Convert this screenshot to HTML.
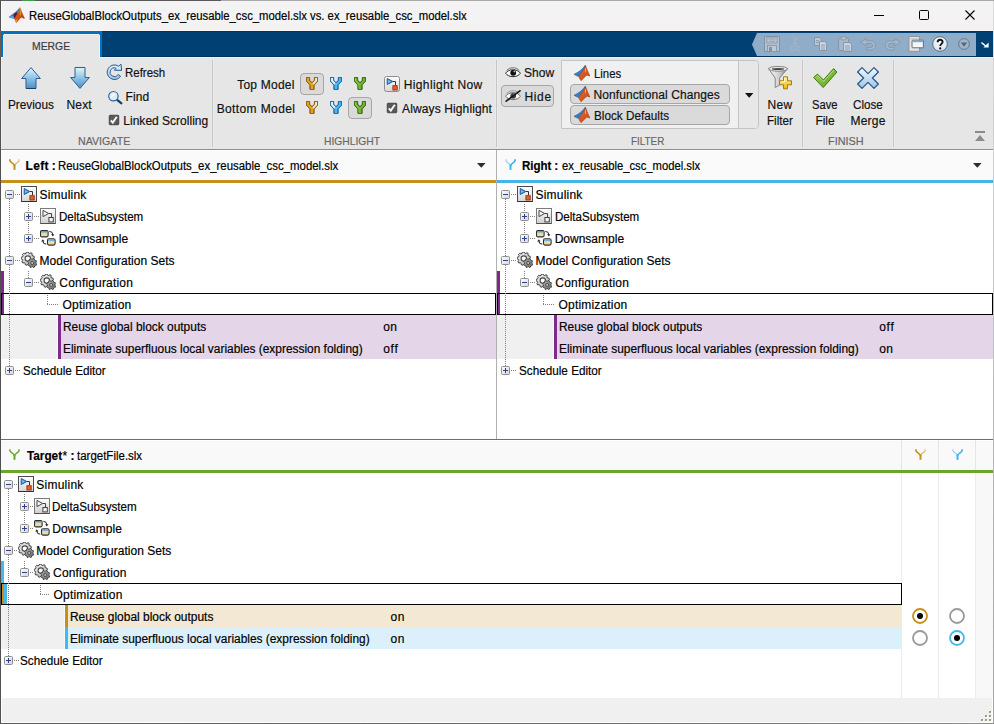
<!DOCTYPE html>
<html lang="en"><head><meta charset="utf-8"><title>Merge</title>
<style>
html,body{margin:0;padding:0;}
body{width:994px;height:724px;overflow:hidden;background:#fff;position:relative;font-family:"Liberation Sans", sans-serif;}
#w{position:absolute;left:0;top:0;width:994px;height:724px;overflow:hidden;}
#w div,#w svg,#w span{position:absolute;}
#w span{white-space:nowrap;line-height:16px;height:16px;transform-origin:0 0;-webkit-text-stroke:0.18px currentColor;}
</style></head><body><div id="w">
<div style="left:0px;top:0px;width:994px;height:724px;background:#fff;"></div>
<div style="left:0px;top:0px;width:994px;height:31px;background:#f3f3f3;"></div>
<div style="left:0px;top:31px;width:994px;height:26px;background:#004073;"></div>
<div style="left:102px;top:31px;width:891px;height:1px;background:#00335f;"></div>
<div style="left:102px;top:56px;width:891px;height:1px;background:#00335f;"></div>
<div style="left:1px;top:30px;width:992px;height:1px;background:#fbf8f5;"></div>
<div style="left:1px;top:31px;width:101px;height:26px;background:#0072c6;"></div>
<div style="left:3px;top:34px;width:97px;height:23px;background:#f7f1ec;"></div>
<div style="left:4px;top:35px;width:95px;height:22px;background:#e6e6e6;"></div>
<div style="left:3px;top:34px;width:1px;height:1px;background:#3a92d2;"></div>
<div style="left:99px;top:34px;width:1px;height:1px;background:#3a92d2;"></div>
<div style="left:1px;top:1px;width:1px;height:29px;background:#fcfcfc;"></div>
<div style="left:1px;top:57px;width:992px;height:92px;background:#e6e6e6;"></div>
<div style="left:100px;top:57px;width:893px;height:1px;background:#f4efeb;"></div>
<div style="left:1px;top:57px;width:2px;height:1px;background:#f8f2ee;"></div>
<div style="left:1px;top:58px;width:1px;height:91px;background:#f0f0f0;"></div>
<div style="left:0px;top:149px;width:994px;height:1px;background:#8e8e8e;"></div>
<div style="left:212px;top:60px;width:1px;height:87px;background:#c6c6c6;"></div>
<div style="left:213px;top:60px;width:1px;height:87px;background:#ececec;"></div>
<div style="left:211px;top:60px;width:1px;height:87px;background:#eaeaea;"></div>
<div style="left:496px;top:60px;width:1px;height:87px;background:#c6c6c6;"></div>
<div style="left:497px;top:60px;width:1px;height:87px;background:#ececec;"></div>
<div style="left:495px;top:60px;width:1px;height:87px;background:#eaeaea;"></div>
<div style="left:802px;top:60px;width:1px;height:87px;background:#c6c6c6;"></div>
<div style="left:803px;top:60px;width:1px;height:87px;background:#ececec;"></div>
<div style="left:801px;top:60px;width:1px;height:87px;background:#eaeaea;"></div>
<div style="left:893px;top:60px;width:1px;height:87px;background:#c6c6c6;"></div>
<div style="left:894px;top:60px;width:1px;height:87px;background:#ececec;"></div>
<div style="left:892px;top:60px;width:1px;height:87px;background:#eaeaea;"></div>
<svg style="left:751px;top:33px" width="226" height="23" viewBox="0 0 226 23"><path d="M6 0H225V23H6L1 11.5Z" fill="#8fadc8"/></svg>
<div style="left:1px;top:150px;width:992px;height:30px;background:#fafafa;"></div>
<div style="left:1px;top:150px;width:992px;height:1px;background:#fff;"></div>
<div style="left:1px;top:180px;width:495px;height:3px;background:#c4901a;"></div>
<div style="left:497px;top:180px;width:496px;height:3px;background:#41b6e6;"></div>
<div style="left:496px;top:150px;width:1px;height:289px;background:#b0b0b0;"></div>
<div style="left:0px;top:439px;width:994px;height:1px;background:#6e6e6e;"></div>
<div style="left:1px;top:271px;width:3px;height:22px;background:#7d2a8c;"></div>
<div style="left:1px;top:293px;width:495px;height:22px;background:#000;"></div>
<div style="left:2px;top:294px;width:493px;height:20px;background:#fff;"></div>
<div style="left:2px;top:294px;width:2px;height:20px;background:#7d2a8c;"></div>
<div style="left:1px;top:315px;width:495px;height:44px;background:#f0f0f1;"></div>
<div style="left:57px;top:315px;width:1px;height:44px;background:#fbfbfb;"></div>
<div style="left:58px;top:315px;width:3px;height:44px;background:#7d2a8c;"></div>
<div style="left:61px;top:315px;width:435px;height:44px;background:#e4d6e8;"></div>
<div style="left:497px;top:271px;width:3px;height:22px;background:#7d2a8c;"></div>
<div style="left:497px;top:293px;width:496px;height:22px;background:#000;"></div>
<div style="left:498px;top:294px;width:494px;height:20px;background:#fff;"></div>
<div style="left:498px;top:294px;width:2px;height:20px;background:#7d2a8c;"></div>
<div style="left:497px;top:315px;width:496px;height:44px;background:#f0f0f1;"></div>
<div style="left:553px;top:315px;width:1px;height:44px;background:#fbfbfb;"></div>
<div style="left:554px;top:315px;width:3px;height:44px;background:#7d2a8c;"></div>
<div style="left:557px;top:315px;width:436px;height:44px;background:#e4d6e8;"></div>
<svg style="left:477px;top:163px" width="9" height="5" viewBox="0 0 9 5"><path d="M0 0H8.6L4.3 4.8Z" fill="#2c2c2c"/></svg>
<svg style="left:973px;top:163px" width="9" height="5" viewBox="0 0 9 5"><path d="M0 0H8.6L4.3 4.8Z" fill="#2c2c2c"/></svg>
<div style="left:1px;top:440px;width:992px;height:30px;background:#f9f9f9;"></div>
<div style="left:1px;top:440px;width:992px;height:1px;background:#fff;"></div>
<div style="left:1px;top:470px;width:992px;height:3px;background:#6da52c;"></div>
<div style="left:1px;top:698px;width:992px;height:25px;background:#fff;"></div>
<div style="left:2px;top:698px;width:990px;height:24px;background:#f0f0f0;"></div>
<div style="left:976px;top:473px;width:17px;height:225px;background:#f8f8f8;"></div>
<div style="left:901px;top:440px;width:1px;height:30px;background:#e6e6e6;"></div>
<div style="left:901px;top:473px;width:1px;height:225px;background:#ececec;"></div>
<div style="left:938px;top:440px;width:1px;height:30px;background:#e6e6e6;"></div>
<div style="left:938px;top:473px;width:1px;height:225px;background:#ececec;"></div>
<div style="left:975px;top:440px;width:1px;height:30px;background:#e6e6e6;"></div>
<div style="left:975px;top:473px;width:1px;height:225px;background:#ececec;"></div>
<div style="left:1px;top:561px;width:3px;height:22px;background:#46b9eb;"></div>
<div style="left:1px;top:583px;width:901px;height:22px;background:#000;"></div>
<div style="left:2px;top:584px;width:899px;height:20px;background:#fff;"></div>
<div style="left:2px;top:584px;width:2px;height:20px;background:#c4901a;"></div>
<div style="left:4px;top:584px;width:3px;height:20px;background:#46b9eb;"></div>
<div style="left:1px;top:605px;width:900px;height:44px;background:#f0f0f1;"></div>
<div style="left:64px;top:605px;width:1px;height:44px;background:#fbfbfb;"></div>
<div style="left:65px;top:605px;width:3px;height:22px;background:#c4901a;"></div>
<div style="left:68px;top:605px;width:833px;height:22px;background:#f3e8d3;"></div>
<div style="left:65px;top:627px;width:3px;height:22px;background:#46b9eb;"></div>
<div style="left:68px;top:627px;width:833px;height:22px;background:#dbf0fb;"></div>
<svg style="left:9px;top:7px" width="16" height="16" viewBox="0 0 16 16"><defs><linearGradient id="g1" x1="0" y1="0" x2="1" y2="1"><stop offset="0" stop-color="#e8682a"/><stop offset="1" stop-color="#b8360f"/></linearGradient></defs><path d="M0 9.8L4.9 6.1C7 4.6 9 2.6 10.6 0.2L10 4.8L7.4 8.8L5.2 11.7L0.3 10.7Z" fill="#2e84d8"/><path d="M0.2 10.1L4.2 9L5.3 11.5L2 11.1Z" fill="#5aaef0"/><path d="M4.9 6.9L7.4 5.3L8.8 6.8L6.6 10.9L5.2 11.7L4.7 9Z" fill="#5a1a30"/><path d="M10.9 0C12.5 3 14 8.5 16 11.5C14.5 11.9 13.2 10.7 12.3 10.4C10.5 11.9 9 14.6 7.2 15.9C6.4 14.7 5.8 13.1 5.2 11.5C7.5 9.1 9.5 4.6 10.9 0Z" fill="url(#g1)"/><path d="M11 2.2C11.8 4 12 6.5 11.4 9.2C10.8 7 10.6 4.4 11 2.2Z" fill="#f5b21c"/><path d="M6.4 13L8.6 12.4L7.3 15.4Z" fill="#f5b21c"/></svg>
<svg style="left:873px;top:10px" width="112" height="11" viewBox="0 0 112 11"><path d="M1 5.5H11" stroke="#000" stroke-width="1"/><rect x="46.5" y="0.5" width="9" height="9" rx="1" fill="none" stroke="#000" stroke-width="1"/><path d="M92.5 0.5L101.5 9.5M101.5 0.5L92.5 9.5" stroke="#000" stroke-width="1.1"/></svg>
<svg style="left:21px;top:67px" width="20" height="22" viewBox="0 0 20 22"><defs><linearGradient id="g2" x1="0" y1="0" x2="0" y2="1"><stop offset="0" stop-color="#e2f4fc"/><stop offset="0.5" stop-color="#8fc3e6"/><stop offset="1" stop-color="#4c8fc8"/></linearGradient></defs><path d="M10 0.6L19.4 11.5H15V21.5H5V11.5H0.6Z" fill="url(#g2)" stroke="#2c5f92" stroke-width="1" stroke-linejoin="round"/><path d="M5 21.5H15" stroke="#183f6a" stroke-width="1"/></svg>
<svg style="left:70px;top:67px" width="20" height="22" viewBox="0 0 20 22"><defs><linearGradient id="g3" x1="0" y1="0" x2="0" y2="1"><stop offset="0" stop-color="#e2f4fc"/><stop offset="0.5" stop-color="#8fc3e6"/><stop offset="1" stop-color="#4c8fc8"/></linearGradient></defs><path d="M5 0.5H15V10.5H19.4L10 21.4L0.6 10.5H5Z" fill="url(#g3)" stroke="#2c5f92" stroke-width="1" stroke-linejoin="round"/></svg>
<svg style="left:106px;top:64px" width="16" height="16" viewBox="0 0 16 16"><defs><linearGradient id="g4" x1="0" y1="0" x2="0" y2="1"><stop offset="0" stop-color="#eaf5fc"/><stop offset="1" stop-color="#9cc4e2"/></linearGradient></defs><path d="M12.2 10.6A4.4 4.4 0 1 1 10.2 4.2L8.3 6.2L15.6 6.4L15 0.2L12.6 2.2A7.3 7.3 0 1 0 14.6 12.2Z" fill="url(#g4)" stroke="#2a5a8e" stroke-width="1" stroke-linejoin="round"/></svg>
<svg style="left:107px;top:90px" width="16" height="15" viewBox="0 0 16 15"><path d="M10.2 9.8L14.4 13.4" stroke="#1b3f70" stroke-width="2.2" stroke-linecap="round"/><circle cx="6.4" cy="6.2" r="4.7" fill="#e2ebf2" stroke="#2a6aa8" stroke-width="1.2"/><path d="M4 7.2L7.4 3.8" stroke="#fff" stroke-width="1.4"/></svg>
<svg style="left:108px;top:114px" width="12.5" height="12.5" viewBox="0 0 12.5 12.5"><rect x="0" y="0" width="12" height="12" rx="1.5" fill="#fff" fill-opacity="0.55"/><rect x="0.5" y="0.5" width="11.5" height="11.5" rx="1.5" fill="#fff" fill-opacity="0.5"/><rect x="1" y="1" width="10" height="10" rx="1" fill="#595959" stroke="#454545" stroke-width="0.6"/><path d="M2.8 6.3L4.8 8.6L8.8 2.8" fill="none" stroke="#f4f4f4" stroke-width="2" stroke-linejoin="miter"/></svg>
<div style="left:300px;top:73px;width:24px;height:22px;background:#dadada;border:1px solid #a6a6a6;border-radius:4px;box-sizing:border-box;"></div>
<div style="left:348px;top:97px;width:24px;height:22px;background:#dadada;border:1px solid #a6a6a6;border-radius:4px;box-sizing:border-box;"></div>
<svg style="left:306px;top:77px" width="12" height="13" viewBox="0 0 12 13"><path d="M0.5 0.5H3.6V3.2L6 5.9L8.4 3.2V0.5H11.5V4.2L8 8.2V12.5H4V8.2L0.5 4.2Z" fill="#dda22a" stroke="#8f6a10" stroke-width="1" stroke-linejoin="miter"/><path d="M8.8 0.9V3.4L6.4 6.1L7.7 7.7L11.1 3.9V0.9Z" fill="#eeeade"/><path d="M8.9 1V3.4L6.6 6" fill="none" stroke="#b8a070" stroke-width="0.5"/><path d="M0.5 0.5H3.6V3.2L6 5.9L8.4 3.2V0.5H11.5V4.2L8 8.2V12.5H4V8.2L0.5 4.2Z" fill="none" stroke="#8f6a10" stroke-width="0.9"/></svg>
<svg style="left:330px;top:77px" width="12" height="13" viewBox="0 0 12 13"><path d="M0.5 0.5H3.6V3.2L6 5.9L8.4 3.2V0.5H11.5V4.2L8 8.2V12.5H4V8.2L0.5 4.2Z" fill="#45b9f5" stroke="#1f6fa6" stroke-width="1" stroke-linejoin="miter"/><path d="M0.9 0.9V3.9L4.3 7.7L5.6 6.1L3.2 3.4V0.9Z" fill="#e4eef5"/><path d="M0.5 0.5H3.6V3.2L6 5.9L8.4 3.2V0.5H11.5V4.2L8 8.2V12.5H4V8.2L0.5 4.2Z" fill="none" stroke="#1f6fa6" stroke-width="0.9"/></svg>
<svg style="left:354px;top:77px" width="12" height="13" viewBox="0 0 12 13"><path d="M0.5 0.5H3.6V3.2L6 5.9L8.4 3.2V0.5H11.5V4.2L8 8.2V12.5H4V8.2L0.5 4.2Z" fill="#74b030" stroke="#3f7416" stroke-width="1" stroke-linejoin="miter"/><path d="M1.6 1.4V3.6L4.8 7.4V11.6" fill="none" stroke="#9ed05a" stroke-width="0.9"/><path d="M0.5 0.5H3.6V3.2L6 5.9L8.4 3.2V0.5H11.5V4.2L8 8.2V12.5H4V8.2L0.5 4.2Z" fill="none" stroke="#3f7416" stroke-width="0.9"/></svg>
<svg style="left:306px;top:101px" width="12" height="13" viewBox="0 0 12 13"><path d="M0.5 0.5H3.6V3.2L6 5.9L8.4 3.2V0.5H11.5V4.2L8 8.2V12.5H4V8.2L0.5 4.2Z" fill="#dda22a" stroke="#8f6a10" stroke-width="1" stroke-linejoin="miter"/><path d="M8.8 0.9V3.4L6.4 6.1L7.7 7.7L11.1 3.9V0.9Z" fill="#eeeade"/><path d="M8.9 1V3.4L6.6 6" fill="none" stroke="#b8a070" stroke-width="0.5"/><path d="M0.5 0.5H3.6V3.2L6 5.9L8.4 3.2V0.5H11.5V4.2L8 8.2V12.5H4V8.2L0.5 4.2Z" fill="none" stroke="#8f6a10" stroke-width="0.9"/></svg>
<svg style="left:330px;top:101px" width="12" height="13" viewBox="0 0 12 13"><path d="M0.5 0.5H3.6V3.2L6 5.9L8.4 3.2V0.5H11.5V4.2L8 8.2V12.5H4V8.2L0.5 4.2Z" fill="#45b9f5" stroke="#1f6fa6" stroke-width="1" stroke-linejoin="miter"/><path d="M0.9 0.9V3.9L4.3 7.7L5.6 6.1L3.2 3.4V0.9Z" fill="#e4eef5"/><path d="M0.5 0.5H3.6V3.2L6 5.9L8.4 3.2V0.5H11.5V4.2L8 8.2V12.5H4V8.2L0.5 4.2Z" fill="none" stroke="#1f6fa6" stroke-width="0.9"/></svg>
<svg style="left:354px;top:101px" width="12" height="13" viewBox="0 0 12 13"><path d="M0.5 0.5H3.6V3.2L6 5.9L8.4 3.2V0.5H11.5V4.2L8 8.2V12.5H4V8.2L0.5 4.2Z" fill="#74b030" stroke="#3f7416" stroke-width="1" stroke-linejoin="miter"/><path d="M1.6 1.4V3.6L4.8 7.4V11.6" fill="none" stroke="#9ed05a" stroke-width="0.9"/><path d="M0.5 0.5H3.6V3.2L6 5.9L8.4 3.2V0.5H11.5V4.2L8 8.2V12.5H4V8.2L0.5 4.2Z" fill="none" stroke="#3f7416" stroke-width="0.9"/></svg>
<svg style="left:384px;top:76px" width="16" height="16" viewBox="0 0 16 16"><defs><linearGradient id="g5" x1="0" y1="0" x2="0" y2="1"><stop offset="0" stop-color="#ffffff"/><stop offset="1" stop-color="#d6d6d6"/></linearGradient></defs><rect x="0.5" y="0.5" width="15" height="15" rx="2" fill="url(#g5)" stroke="#8c8c8c"/><path d="M9 5.5H11.5V9" fill="none" stroke="#333" stroke-width="1"/><path d="M3.2 2.5L8.8 5.5L3.2 8.5Z" fill="#4fa2ea" stroke="#1a5aa6" stroke-width="1" stroke-linejoin="round"/><path d="M4.2 4.4L6.4 5.5L4.2 6.6Z" fill="#8cc8f6"/><rect x="8.9" y="9.7" width="4.3" height="4.3" fill="#e8602a" stroke="#9c2c0a" stroke-width="0.9"/></svg>
<svg style="left:386px;top:102px" width="12.5" height="12.5" viewBox="0 0 12.5 12.5"><rect x="0" y="0" width="12" height="12" rx="1.5" fill="#fff" fill-opacity="0.55"/><rect x="0.5" y="0.5" width="11.5" height="11.5" rx="1.5" fill="#fff" fill-opacity="0.5"/><rect x="1" y="1" width="10" height="10" rx="1" fill="#595959" stroke="#454545" stroke-width="0.6"/><path d="M2.8 6.3L4.8 8.6L8.8 2.8" fill="none" stroke="#f4f4f4" stroke-width="2" stroke-linejoin="miter"/></svg>
<svg style="left:505px;top:67px" width="16" height="12" viewBox="0 0 16 12"><path d="M0.6 6.2C3.5 1.6 12.5 1.6 15.4 6.2C12.5 10.8 3.5 10.8 0.6 6.2Z" fill="#fbfbfb" stroke="#2a2a2a" stroke-width="1"/><path d="M1.6 3.6C4.6 -0.2 11.4 -0.2 14.4 3.6" fill="none" stroke="#2a2a2a" stroke-width="0.8" opacity="0.75"/><circle cx="8.2" cy="5.8" r="2.9" fill="#111"/><circle cx="9.2" cy="4.6" r="0.8" fill="#ccc"/></svg>
<div style="left:501px;top:85px;width:53px;height:22px;background:#dadada;border:1px solid #a6a6a6;border-radius:4px;box-sizing:border-box;"></div>
<svg style="left:505px;top:90px" width="16" height="12" viewBox="0 0 16 12"><path d="M0.6 6.2C3.5 1.6 12.5 1.6 15.4 6.2C12.5 10.8 3.5 10.8 0.6 6.2Z" fill="#fbfbfb" stroke="#6e6e6e" stroke-width="1"/><path d="M1.6 3.6C4.6 -0.2 11.4 -0.2 14.4 3.6" fill="none" stroke="#6e6e6e" stroke-width="0.8" opacity="0.75"/><circle cx="8.2" cy="5.8" r="2.9" fill="#444"/><circle cx="9.2" cy="4.6" r="0.8" fill="#ccc"/><path d="M0.6 11.6L15.6 0.4" stroke="#111" stroke-width="1.6"/></svg>
<div style="left:561px;top:60px;width:198px;height:69px;background:#f0f0f0;border:1px solid #c4c4c4;border-radius:0 4px 4px 0;box-sizing:border-box;"></div>
<div style="left:738px;top:61px;width:19px;height:67px;background:#e7e7e7;border-left:1px solid #c4c4c4;border-radius:0 3px 3px 0;"></div>
<div style="left:570px;top:84px;width:160px;height:20px;background:#dadada;border:1px solid #a6a6a6;border-radius:4px;box-sizing:border-box;"></div>
<div style="left:570px;top:105px;width:160px;height:20px;background:#dadada;border:1px solid #a6a6a6;border-radius:4px;box-sizing:border-box;"></div>
<svg style="left:574px;top:65px" width="16" height="16" viewBox="0 0 16 16"><defs><linearGradient id="g6" x1="0" y1="0" x2="1" y2="1"><stop offset="0" stop-color="#e46a30"/><stop offset="1" stop-color="#c44a18"/></linearGradient></defs><path d="M0 9.2C4.5 7.5 8.5 4 11.3 0.3L10.6 3.4L4.6 11.4C3 11 1.2 10.2 0 9.2Z" fill="#2f80cf" stroke="#1d5c9e" stroke-width="0.5"/><path d="M4.5 11.2L10.5 3.2L11.4 0.3C12.8 3.5 14.2 8 16 11C14.8 11 13.8 10.4 13 10C11 11.6 9 14 7 15.7C6 14.4 5.2 12.8 4.5 11.2Z" fill="url(#g6)" stroke="#9c3208" stroke-width="0.5"/><path d="M11.4 2.6C12 4.4 12.1 6.2 11.7 7.8C11.1 6.2 11 4.2 11.4 2.6Z" fill="#f9d9c4"/></svg>
<svg style="left:574px;top:86px" width="16" height="16" viewBox="0 0 16 16"><defs><linearGradient id="g7" x1="0" y1="0" x2="1" y2="1"><stop offset="0" stop-color="#e46a30"/><stop offset="1" stop-color="#c44a18"/></linearGradient></defs><path d="M0 9.2C4.5 7.5 8.5 4 11.3 0.3L10.6 3.4L4.6 11.4C3 11 1.2 10.2 0 9.2Z" fill="#2f80cf" stroke="#1d5c9e" stroke-width="0.5"/><path d="M4.5 11.2L10.5 3.2L11.4 0.3C12.8 3.5 14.2 8 16 11C14.8 11 13.8 10.4 13 10C11 11.6 9 14 7 15.7C6 14.4 5.2 12.8 4.5 11.2Z" fill="url(#g7)" stroke="#9c3208" stroke-width="0.5"/><path d="M11.4 2.6C12 4.4 12.1 6.2 11.7 7.8C11.1 6.2 11 4.2 11.4 2.6Z" fill="#f9d9c4"/></svg>
<svg style="left:574px;top:107px" width="16" height="16" viewBox="0 0 16 16"><defs><linearGradient id="g8" x1="0" y1="0" x2="1" y2="1"><stop offset="0" stop-color="#e46a30"/><stop offset="1" stop-color="#c44a18"/></linearGradient></defs><path d="M0 9.2C4.5 7.5 8.5 4 11.3 0.3L10.6 3.4L4.6 11.4C3 11 1.2 10.2 0 9.2Z" fill="#2f80cf" stroke="#1d5c9e" stroke-width="0.5"/><path d="M4.5 11.2L10.5 3.2L11.4 0.3C12.8 3.5 14.2 8 16 11C14.8 11 13.8 10.4 13 10C11 11.6 9 14 7 15.7C6 14.4 5.2 12.8 4.5 11.2Z" fill="url(#g8)" stroke="#9c3208" stroke-width="0.5"/><path d="M11.4 2.6C12 4.4 12.1 6.2 11.7 7.8C11.1 6.2 11 4.2 11.4 2.6Z" fill="#f9d9c4"/></svg>
<svg style="left:745px;top:93px" width="9" height="5" viewBox="0 0 9 5"><path d="M0 0H8.4L4.2 4.7Z" fill="#111"/></svg>
<svg style="left:768px;top:66px" width="24" height="24" viewBox="0 0 24 24"><defs><linearGradient id="g9" x1="0" y1="0" x2="1" y2="0"><stop offset="0" stop-color="#fafafa"/><stop offset="0.55" stop-color="#d0d0d0"/><stop offset="1" stop-color="#8c8c8c"/></linearGradient><linearGradient id="g10" x1="0" y1="0" x2="0" y2="1"><stop offset="0" stop-color="#fff3a0"/><stop offset="1" stop-color="#f0b400"/></linearGradient></defs><path d="M0.5 2.6L7.2 12V21.6L11.6 19V12L19.5 2.6Z" fill="url(#g9)" stroke="#7c7c7c" stroke-width="0.9" stroke-linejoin="round"/><ellipse cx="10" cy="2.8" rx="9.5" ry="2.4" fill="#e8e8e8" stroke="#7c7c7c" stroke-width="0.9"/><ellipse cx="10" cy="3" rx="6.2" ry="1.1" fill="#4a4a4a"/><path d="M15.5 10.8H19.5V14.8H23.5V18.8H19.5V22.8H15.5V18.8H11.5V14.8H15.5Z" fill="url(#g10)" stroke="#a87a10" stroke-width="1" stroke-linejoin="round"/><path d="M16.6 12V15.9H12.7" fill="none" stroke="#fffbe0" stroke-width="1"/></svg>
<svg style="left:813px;top:67.6px" width="25" height="21" viewBox="0 0 25 21"><defs><linearGradient id="g11" x1="0" y1="0" x2="1" y2="1"><stop offset="0" stop-color="#a6d860"/><stop offset="1" stop-color="#5a9c1e"/></linearGradient></defs><path d="M0.6 9.5L4.4 6L10.4 12L20.6 0.6L24 4L10.2 19.6Z" fill="url(#g11)" stroke="#3f7a12" stroke-width="1" stroke-linejoin="round"/><path d="M4.5 7.6L10.4 13.6L20.7 2.2" fill="none" stroke="#c4ea8e" stroke-width="0.9" opacity="0.8"/></svg>
<svg style="left:857px;top:67px" width="22" height="22" viewBox="0 0 22 22"><defs><linearGradient id="g12" x1="0" y1="0" x2="0" y2="1"><stop offset="0" stop-color="#f4fafe"/><stop offset="1" stop-color="#9cc4e4"/></linearGradient></defs><path d="M5 0.6L11 6.6L17 0.6L21.4 5L15.4 11L21.4 17L17 21.4L11 15.4L5 21.4L0.6 17L6.6 11L0.6 5Z" fill="url(#g12)" stroke="#24568e" stroke-width="1.2" stroke-linejoin="round"/></svg>
<svg style="left:975px;top:131px" width="10" height="10" viewBox="0 0 10 10"><path d="M0 0H10V2H0Z M5 4L10 10H0Z" fill="#8c8c8c"/></svg>
<svg style="left:764px;top:36px" width="16" height="16" viewBox="0 0 16 16"><path d="M0.5 0.5H15.5V15.5H0.5Z" fill="#b2c0cf" stroke="#7f92a6"/><rect x="3" y="2" width="10" height="5" fill="#c4d0dc" stroke="#7f92a6" stroke-width="0.8"/><path d="M4.5 3.8H11.5M4.5 5.4H11.5" stroke="#7f92a6" stroke-width="0.7"/><rect x="3.5" y="9.5" width="9" height="6" fill="#bcc8d4" stroke="#7f92a6" stroke-width="0.8"/><rect x="5" y="11" width="3" height="4.5" fill="#7f92a6"/></svg>
<svg style="left:790px;top:36px" width="11" height="16" viewBox="0 0 11 16"><path d="M7.6 0.4L3.6 10.5M3.2 0.4L7.4 10.5" stroke="#a4b4c5" stroke-width="1.1" fill="none"/><ellipse cx="2.6" cy="12.6" rx="1.7" ry="2.4" fill="none" stroke="#a4b4c5" stroke-width="1.1"/><ellipse cx="8.2" cy="12.6" rx="1.7" ry="2.4" fill="none" stroke="#a4b4c5" stroke-width="1.1"/></svg>
<svg style="left:814px;top:37px" width="14" height="14" viewBox="0 0 14 14"><path d="M0.5 0.5H5.5L7.5 2.5V8.5H0.5Z" fill="#bac7d4" stroke="#7f92a6" stroke-width="0.9"/><path d="M2 3.5H5M2 5.5H6" stroke="#7f92a6" stroke-width="0.8"/><path d="M5.5 4.5H10.5L12.5 6.5V13.5H5.5Z" fill="#cad5e0" stroke="#7f92a6" stroke-width="0.9"/><path d="M7 8H11M7 10H11M7 12H11" stroke="#7f92a6" stroke-width="0.8"/></svg>
<svg style="left:838px;top:36px" width="14" height="16" viewBox="0 0 14 16"><rect x="0.5" y="2.5" width="10" height="12" rx="1" fill="#a9b8c8" stroke="#7f92a6" stroke-width="0.9"/><rect x="3" y="0.8" width="5" height="3" rx="1" fill="#b8c4d0" stroke="#7f92a6" stroke-width="0.8"/><path d="M5.5 6.5H11.5L13.5 8.5V15.5H5.5Z" fill="#cad5e0" stroke="#7f92a6" stroke-width="0.9"/><path d="M7 10H12M7 12H12M7 14H12" stroke="#7f92a6" stroke-width="0.8"/></svg>
<svg style="left:860px;top:38px" width="17" height="13" viewBox="0 0 17 13"><path d="M0.8 4.2L6.2 0.6V2.8H10.2C13.8 2.8 15.6 4.8 15.6 7.4C15.6 10 13.8 12 10.2 12H7V9.6H10C11.8 9.6 12.8 8.8 12.8 7.4C12.8 6 11.8 5.4 10 5.4H6.2V7.8Z" fill="#a9b8c8" stroke="#7f92a6" stroke-width="0.8" stroke-linejoin="round"/></svg>
<svg style="left:884px;top:38px" width="17" height="13" viewBox="0 0 17 13"><path d="M16.2 4.2L10.8 0.6V2.8H6.8C3.2 2.8 1.4 4.8 1.4 7.4C1.4 10 3.2 12 6.8 12H10V9.6H7C5.2 9.6 4.2 8.8 4.2 7.4C4.2 6 5.2 5.4 7 5.4H10.8V7.8Z" fill="#a9b8c8" stroke="#7f92a6" stroke-width="0.8" stroke-linejoin="round"/></svg>
<svg style="left:908px;top:36px" width="16" height="16" viewBox="0 0 16 16"><rect x="1" y="0.6" width="10.5" height="14.6" fill="#e4e4e4" stroke="#8a8a8a" stroke-width="0.8"/><path d="M1 2.8H11.5" stroke="#b8b8b8" stroke-width="0.8"/><rect x="4" y="4.2" width="11.4" height="7.6" rx="0.8" fill="#f6f6f6" stroke="#5f5f5f" stroke-width="0.9"/><path d="M4.4 5.4H15" stroke="#6fb0e6" stroke-width="1.6"/></svg>
<svg style="left:932px;top:36px" width="16" height="16" viewBox="0 0 16 16"><defs><radialGradient id="g13" cx="0.5" cy="0.3" r="0.8"><stop offset="0" stop-color="#ffffff"/><stop offset="1" stop-color="#d4dde6"/></radialGradient></defs><circle cx="8" cy="8" r="7.3" fill="url(#g13)" stroke="#4a6a8a" stroke-width="0.9"/><path d="M5.6 6.2C5.6 2.9 10.6 2.9 10.6 6C10.6 7.8 8.2 8 8.2 10" fill="none" stroke="#111" stroke-width="1.9"/><circle cx="8.2" cy="12.4" r="1.15" fill="#111"/></svg>
<svg style="left:958px;top:38px" width="12" height="12" viewBox="0 0 12 12"><circle cx="6" cy="6" r="5.4" fill="#9fb4c8" stroke="#6e7a86" stroke-width="1"/><path d="M2.8 4.4H9.2L6 8.8Z" fill="#5c6670"/></svg>
<svg style="left:981px;top:41.5px" width="8" height="6" viewBox="0 0 8 6"><path d="M0.5 0.6L5 4.2" stroke="#fff" stroke-width="1.4"/><path d="M7.6 0.6V5.6H2.4Z" fill="#fff"/></svg>
<svg style="left:8.5px;top:159px" width="11" height="11" viewBox="0 0 11 11"><path d="M10.1 0.2V1.4C10.1 3.6 5.5 4.2 5.5 7" fill="none" stroke="#d9b865" stroke-width="1.2"/><path d="M0.9 0.2V1.4C0.9 3.6 5.5 4.2 5.5 7" fill="none" stroke="#c4901a" stroke-width="1.7"/><path d="M5.5 5.6V10.8" stroke="#c4901a" stroke-width="2"/></svg>
<svg style="left:505px;top:159px" width="11" height="11" viewBox="0 0 11 11"><path d="M0.9 0.2V1.4C0.9 3.6 5.5 4.2 5.5 7" fill="none" stroke="#94d4f0" stroke-width="1.2"/><path d="M10.1 0.2V1.4C10.1 3.6 5.5 4.2 5.5 7" fill="none" stroke="#3db5ea" stroke-width="1.7"/><path d="M5.5 5.6V10.8" stroke="#3db5ea" stroke-width="2"/></svg>
<svg style="left:8.5px;top:449px" width="11" height="11" viewBox="0 0 11 11"><path d="M0.9 0.2V1.4C0.9 3.6 5.5 4.2 5.5 7" fill="none" stroke="#6da52c" stroke-width="1.5"/><path d="M10.1 0.2V1.4C10.1 3.6 5.5 4.2 5.5 7" fill="none" stroke="#6da52c" stroke-width="1.5"/><path d="M5.5 5.6V10.8" stroke="#6da52c" stroke-width="2"/></svg>
<svg style="left:915px;top:449px" width="11" height="11" viewBox="0 0 11 11"><path d="M10.1 0.2V1.4C10.1 3.6 5.5 4.2 5.5 7" fill="none" stroke="#d9b865" stroke-width="1.2"/><path d="M0.9 0.2V1.4C0.9 3.6 5.5 4.2 5.5 7" fill="none" stroke="#c4901a" stroke-width="1.7"/><path d="M5.5 5.6V10.8" stroke="#c4901a" stroke-width="2"/></svg>
<svg style="left:952px;top:449px" width="11" height="11" viewBox="0 0 11 11"><path d="M0.9 0.2V1.4C0.9 3.6 5.5 4.2 5.5 7" fill="none" stroke="#94d4f0" stroke-width="1.2"/><path d="M10.1 0.2V1.4C10.1 3.6 5.5 4.2 5.5 7" fill="none" stroke="#3db5ea" stroke-width="1.7"/><path d="M5.5 5.6V10.8" stroke="#3db5ea" stroke-width="2"/></svg>
<div style="left:9px;top:199px;width:1px;height:167px;background:repeating-linear-gradient(to bottom,#7f7f7f 0,#7f7f7f 1px,transparent 1px,transparent 2px)"></div>
<div style="left:28px;top:204px;width:1px;height:30px;background:repeating-linear-gradient(to bottom,#7f7f7f 0,#7f7f7f 1px,transparent 1px,transparent 2px)"></div>
<div style="left:28px;top:271px;width:1px;height:7px;background:repeating-linear-gradient(to bottom,#7f7f7f 0,#7f7f7f 1px,transparent 1px,transparent 2px)"></div>
<div style="left:15px;top:194px;width:6px;height:1px;background:repeating-linear-gradient(to right,#7f7f7f 0,#7f7f7f 1px,transparent 1px,transparent 2px)"></div>
<div style="left:34px;top:216px;width:6px;height:1px;background:repeating-linear-gradient(to right,#7f7f7f 0,#7f7f7f 1px,transparent 1px,transparent 2px)"></div>
<div style="left:34px;top:238px;width:6px;height:1px;background:repeating-linear-gradient(to right,#7f7f7f 0,#7f7f7f 1px,transparent 1px,transparent 2px)"></div>
<div style="left:15px;top:260px;width:6px;height:1px;background:repeating-linear-gradient(to right,#7f7f7f 0,#7f7f7f 1px,transparent 1px,transparent 2px)"></div>
<div style="left:34px;top:282px;width:6px;height:1px;background:repeating-linear-gradient(to right,#7f7f7f 0,#7f7f7f 1px,transparent 1px,transparent 2px)"></div>
<div style="left:15px;top:370px;width:6px;height:1px;background:repeating-linear-gradient(to right,#7f7f7f 0,#7f7f7f 1px,transparent 1px,transparent 2px)"></div>
<div style="left:47px;top:295px;width:1px;height:10px;background:repeating-linear-gradient(to bottom,#7f7f7f 0,#7f7f7f 1px,transparent 1px,transparent 2px)"></div>
<div style="left:47px;top:304px;width:12px;height:1px;background:repeating-linear-gradient(to right,#7f7f7f 0,#7f7f7f 1px,transparent 1px,transparent 2px)"></div>
<svg style="left:5px;top:190px" width="9" height="9" viewBox="0 0 9 9"><defs><linearGradient id="g14" x1="0" y1="0" x2="1" y2="1"><stop offset="0" stop-color="#ffffff"/><stop offset="1" stop-color="#d4d4d4"/></linearGradient></defs><rect x="0.5" y="0.5" width="8" height="8" rx="1" fill="url(#g14)" stroke="#8f8f8f"/><path d="M2 4.5H7" stroke="#2e3f8f" stroke-width="1"/></svg>
<svg style="left:24px;top:212px" width="9" height="9" viewBox="0 0 9 9"><defs><linearGradient id="g15" x1="0" y1="0" x2="1" y2="1"><stop offset="0" stop-color="#ffffff"/><stop offset="1" stop-color="#d4d4d4"/></linearGradient></defs><rect x="0.5" y="0.5" width="8" height="8" rx="1" fill="url(#g15)" stroke="#8f8f8f"/><path d="M2 4.5H7" stroke="#2e3f8f" stroke-width="1"/><path d="M4.5 2V7" stroke="#2e3f8f" stroke-width="1"/></svg>
<svg style="left:24px;top:234px" width="9" height="9" viewBox="0 0 9 9"><defs><linearGradient id="g16" x1="0" y1="0" x2="1" y2="1"><stop offset="0" stop-color="#ffffff"/><stop offset="1" stop-color="#d4d4d4"/></linearGradient></defs><rect x="0.5" y="0.5" width="8" height="8" rx="1" fill="url(#g16)" stroke="#8f8f8f"/><path d="M2 4.5H7" stroke="#2e3f8f" stroke-width="1"/><path d="M4.5 2V7" stroke="#2e3f8f" stroke-width="1"/></svg>
<svg style="left:5px;top:256px" width="9" height="9" viewBox="0 0 9 9"><defs><linearGradient id="g17" x1="0" y1="0" x2="1" y2="1"><stop offset="0" stop-color="#ffffff"/><stop offset="1" stop-color="#d4d4d4"/></linearGradient></defs><rect x="0.5" y="0.5" width="8" height="8" rx="1" fill="url(#g17)" stroke="#8f8f8f"/><path d="M2 4.5H7" stroke="#2e3f8f" stroke-width="1"/></svg>
<svg style="left:24px;top:278px" width="9" height="9" viewBox="0 0 9 9"><defs><linearGradient id="g18" x1="0" y1="0" x2="1" y2="1"><stop offset="0" stop-color="#ffffff"/><stop offset="1" stop-color="#d4d4d4"/></linearGradient></defs><rect x="0.5" y="0.5" width="8" height="8" rx="1" fill="url(#g18)" stroke="#8f8f8f"/><path d="M2 4.5H7" stroke="#2e3f8f" stroke-width="1"/></svg>
<svg style="left:5px;top:366px" width="9" height="9" viewBox="0 0 9 9"><defs><linearGradient id="g19" x1="0" y1="0" x2="1" y2="1"><stop offset="0" stop-color="#ffffff"/><stop offset="1" stop-color="#d4d4d4"/></linearGradient></defs><rect x="0.5" y="0.5" width="8" height="8" rx="1" fill="url(#g19)" stroke="#8f8f8f"/><path d="M2 4.5H7" stroke="#2e3f8f" stroke-width="1"/><path d="M4.5 2V7" stroke="#2e3f8f" stroke-width="1"/></svg>
<svg style="left:21px;top:186px" width="16" height="16" viewBox="0 0 16 16"><defs><linearGradient id="g20" x1="0" y1="0" x2="0" y2="1"><stop offset="0" stop-color="#ffffff"/><stop offset="1" stop-color="#d6d6d6"/></linearGradient></defs><rect x="0.5" y="0.5" width="15" height="15" rx="0" fill="url(#g20)" stroke="#4a4a4a"/><path d="M0.5 15.5H15.5" stroke="#2e2e2e"/><path d="M9 5.5H11.5V9" fill="none" stroke="#333" stroke-width="1"/><path d="M3.2 2.5L8.8 5.5L3.2 8.5Z" fill="#4fa2ea" stroke="#1a5aa6" stroke-width="1" stroke-linejoin="round"/><path d="M4.2 4.4L6.4 5.5L4.2 6.6Z" fill="#8cc8f6"/><rect x="8.9" y="9.7" width="4.3" height="4.3" fill="#e8602a" stroke="#9c2c0a" stroke-width="0.9"/></svg>
<svg style="left:40px;top:208px" width="16" height="16" viewBox="0 0 16 16"><defs><linearGradient id="g21" x1="0" y1="0" x2="0" y2="1"><stop offset="0" stop-color="#ffffff"/><stop offset="1" stop-color="#cfcfcf"/></linearGradient></defs><rect x="0.5" y="0.5" width="15" height="15" fill="url(#g21)" stroke="#7a7a7a"/><path d="M0.5 15.5H15.5" stroke="#505050"/><path d="M8.6 5.5H11.5V9" fill="none" stroke="#444" stroke-width="1"/><path d="M3 2.4L8.6 5.5L3 8.6Z" fill="#fafafa" stroke="#444" stroke-width="1" stroke-linejoin="round"/><rect x="8.9" y="9.5" width="4.4" height="4.4" fill="#f4f4f4" stroke="#444" stroke-width="1"/></svg>
<svg style="left:40px;top:230px" width="16" height="16" viewBox="0 0 16 16"><rect x="0.5" y="0.5" width="7.6" height="6.4" rx="1.5" fill="#ecd9a6" stroke="#2e2e2e" stroke-width="1.1"/><path d="M1 2.6V2Q1 1 2 1H6.6Q7.6 1 7.6 2V2.6Z" fill="#4da3e8"/><rect x="7.5" y="8.7" width="7.6" height="6.4" rx="1.5" fill="#ecd9a6" stroke="#2e2e2e" stroke-width="1.1"/><path d="M8 10.799999999999999V10.2Q8 9.2 9 9.2H13.6Q14.6 9.2 14.6 10.2V10.799999999999999Z" fill="#4da3e8"/><path d="M9.4 1.4Q12.8 1.2 12.8 5" fill="none" stroke="#222" stroke-width="1"/><path d="M11.2 4.2L12.8 6.4L14.4 4.2Z" fill="#222"/><path d="M6.2 14.2Q2.8 14.4 2.8 10.6" fill="none" stroke="#222" stroke-width="1"/><path d="M1.2 11.4L2.8 9.2L4.4 11.4Z" fill="#222"/></svg>
<svg style="left:21px;top:252px" width="16" height="16" viewBox="0 0 16 16"><defs><linearGradient id="g22" x1="0" y1="0" x2="1" y2="1"><stop offset="0" stop-color="#f4f4f4"/><stop offset="1" stop-color="#b4b4b4"/></linearGradient><linearGradient id="g23" x1="0" y1="0" x2="1" y2="1"><stop offset="0" stop-color="#b4b4b4"/><stop offset="1" stop-color="#686868"/></linearGradient></defs><path d="M12.19 7.69L13.15 8.74L12.52 10.10L11.09 10.04L10.23 10.90L10.28 12.32L8.93 12.95L7.88 11.99L6.66 12.10L5.79 13.22L4.35 12.84L4.16 11.43L3.16 10.72L1.77 11.03L0.91 9.80L1.68 8.60L1.36 7.42L0.10 6.76L0.23 5.27L1.59 4.84L2.11 3.73L1.57 2.41L2.63 1.36L3.94 1.90L5.05 1.39L5.48 0.03L6.97 -0.10L7.63 1.16L8.81 1.48L10.01 0.72L11.24 1.58L10.93 2.97L11.63 3.97L13.04 4.16L13.43 5.60L12.30 6.47Z" fill="url(#g22)" stroke="#3c3c3c" stroke-width="1" stroke-linejoin="round"/><circle cx="6.8" cy="6.6" r="2.7" fill="#fdfdfd" stroke="#4a4a4a" stroke-width="1.1"/><path d="M14.98 11.38L15.76 12.12L15.34 13.22L14.26 13.25L13.61 13.94L13.63 15.02L12.56 15.50L11.77 14.76L10.82 14.78L10.08 15.56L8.98 15.14L8.95 14.06L8.26 13.41L7.18 13.43L6.70 12.36L7.44 11.57L7.42 10.62L6.64 9.88L7.06 8.78L8.14 8.75L8.79 8.06L8.77 6.98L9.84 6.50L10.63 7.24L11.58 7.22L12.32 6.44L13.42 6.86L13.45 7.94L14.14 8.59L15.22 8.57L15.70 9.64L14.96 10.43Z" fill="url(#g23)" stroke="#383838" stroke-width="0.9" stroke-linejoin="round"/><circle cx="11.2" cy="11" r="1.6" fill="#b8b8b8" stroke="#444" stroke-width="0.9"/></svg>
<svg style="left:40px;top:274px" width="16" height="16" viewBox="0 0 16 16"><defs><linearGradient id="g24" x1="0" y1="0" x2="1" y2="1"><stop offset="0" stop-color="#f4f4f4"/><stop offset="1" stop-color="#b4b4b4"/></linearGradient><linearGradient id="g25" x1="0" y1="0" x2="1" y2="1"><stop offset="0" stop-color="#b4b4b4"/><stop offset="1" stop-color="#686868"/></linearGradient></defs><path d="M12.19 7.69L13.15 8.74L12.52 10.10L11.09 10.04L10.23 10.90L10.28 12.32L8.93 12.95L7.88 11.99L6.66 12.10L5.79 13.22L4.35 12.84L4.16 11.43L3.16 10.72L1.77 11.03L0.91 9.80L1.68 8.60L1.36 7.42L0.10 6.76L0.23 5.27L1.59 4.84L2.11 3.73L1.57 2.41L2.63 1.36L3.94 1.90L5.05 1.39L5.48 0.03L6.97 -0.10L7.63 1.16L8.81 1.48L10.01 0.72L11.24 1.58L10.93 2.97L11.63 3.97L13.04 4.16L13.43 5.60L12.30 6.47Z" fill="url(#g24)" stroke="#3c3c3c" stroke-width="1" stroke-linejoin="round"/><circle cx="6.8" cy="6.6" r="2.7" fill="#fdfdfd" stroke="#4a4a4a" stroke-width="1.1"/><path d="M14.98 11.38L15.76 12.12L15.34 13.22L14.26 13.25L13.61 13.94L13.63 15.02L12.56 15.50L11.77 14.76L10.82 14.78L10.08 15.56L8.98 15.14L8.95 14.06L8.26 13.41L7.18 13.43L6.70 12.36L7.44 11.57L7.42 10.62L6.64 9.88L7.06 8.78L8.14 8.75L8.79 8.06L8.77 6.98L9.84 6.50L10.63 7.24L11.58 7.22L12.32 6.44L13.42 6.86L13.45 7.94L14.14 8.59L15.22 8.57L15.70 9.64L14.96 10.43Z" fill="url(#g25)" stroke="#383838" stroke-width="0.9" stroke-linejoin="round"/><circle cx="11.2" cy="11" r="1.6" fill="#b8b8b8" stroke="#444" stroke-width="0.9"/></svg>
<div style="left:505px;top:199px;width:1px;height:167px;background:repeating-linear-gradient(to bottom,#7f7f7f 0,#7f7f7f 1px,transparent 1px,transparent 2px)"></div>
<div style="left:524px;top:204px;width:1px;height:30px;background:repeating-linear-gradient(to bottom,#7f7f7f 0,#7f7f7f 1px,transparent 1px,transparent 2px)"></div>
<div style="left:524px;top:271px;width:1px;height:7px;background:repeating-linear-gradient(to bottom,#7f7f7f 0,#7f7f7f 1px,transparent 1px,transparent 2px)"></div>
<div style="left:511px;top:194px;width:6px;height:1px;background:repeating-linear-gradient(to right,#7f7f7f 0,#7f7f7f 1px,transparent 1px,transparent 2px)"></div>
<div style="left:530px;top:216px;width:6px;height:1px;background:repeating-linear-gradient(to right,#7f7f7f 0,#7f7f7f 1px,transparent 1px,transparent 2px)"></div>
<div style="left:530px;top:238px;width:6px;height:1px;background:repeating-linear-gradient(to right,#7f7f7f 0,#7f7f7f 1px,transparent 1px,transparent 2px)"></div>
<div style="left:511px;top:260px;width:6px;height:1px;background:repeating-linear-gradient(to right,#7f7f7f 0,#7f7f7f 1px,transparent 1px,transparent 2px)"></div>
<div style="left:530px;top:282px;width:6px;height:1px;background:repeating-linear-gradient(to right,#7f7f7f 0,#7f7f7f 1px,transparent 1px,transparent 2px)"></div>
<div style="left:511px;top:370px;width:6px;height:1px;background:repeating-linear-gradient(to right,#7f7f7f 0,#7f7f7f 1px,transparent 1px,transparent 2px)"></div>
<div style="left:543px;top:295px;width:1px;height:10px;background:repeating-linear-gradient(to bottom,#7f7f7f 0,#7f7f7f 1px,transparent 1px,transparent 2px)"></div>
<div style="left:543px;top:304px;width:12px;height:1px;background:repeating-linear-gradient(to right,#7f7f7f 0,#7f7f7f 1px,transparent 1px,transparent 2px)"></div>
<svg style="left:501px;top:190px" width="9" height="9" viewBox="0 0 9 9"><defs><linearGradient id="g26" x1="0" y1="0" x2="1" y2="1"><stop offset="0" stop-color="#ffffff"/><stop offset="1" stop-color="#d4d4d4"/></linearGradient></defs><rect x="0.5" y="0.5" width="8" height="8" rx="1" fill="url(#g26)" stroke="#8f8f8f"/><path d="M2 4.5H7" stroke="#2e3f8f" stroke-width="1"/></svg>
<svg style="left:520px;top:212px" width="9" height="9" viewBox="0 0 9 9"><defs><linearGradient id="g27" x1="0" y1="0" x2="1" y2="1"><stop offset="0" stop-color="#ffffff"/><stop offset="1" stop-color="#d4d4d4"/></linearGradient></defs><rect x="0.5" y="0.5" width="8" height="8" rx="1" fill="url(#g27)" stroke="#8f8f8f"/><path d="M2 4.5H7" stroke="#2e3f8f" stroke-width="1"/><path d="M4.5 2V7" stroke="#2e3f8f" stroke-width="1"/></svg>
<svg style="left:520px;top:234px" width="9" height="9" viewBox="0 0 9 9"><defs><linearGradient id="g28" x1="0" y1="0" x2="1" y2="1"><stop offset="0" stop-color="#ffffff"/><stop offset="1" stop-color="#d4d4d4"/></linearGradient></defs><rect x="0.5" y="0.5" width="8" height="8" rx="1" fill="url(#g28)" stroke="#8f8f8f"/><path d="M2 4.5H7" stroke="#2e3f8f" stroke-width="1"/><path d="M4.5 2V7" stroke="#2e3f8f" stroke-width="1"/></svg>
<svg style="left:501px;top:256px" width="9" height="9" viewBox="0 0 9 9"><defs><linearGradient id="g29" x1="0" y1="0" x2="1" y2="1"><stop offset="0" stop-color="#ffffff"/><stop offset="1" stop-color="#d4d4d4"/></linearGradient></defs><rect x="0.5" y="0.5" width="8" height="8" rx="1" fill="url(#g29)" stroke="#8f8f8f"/><path d="M2 4.5H7" stroke="#2e3f8f" stroke-width="1"/></svg>
<svg style="left:520px;top:278px" width="9" height="9" viewBox="0 0 9 9"><defs><linearGradient id="g30" x1="0" y1="0" x2="1" y2="1"><stop offset="0" stop-color="#ffffff"/><stop offset="1" stop-color="#d4d4d4"/></linearGradient></defs><rect x="0.5" y="0.5" width="8" height="8" rx="1" fill="url(#g30)" stroke="#8f8f8f"/><path d="M2 4.5H7" stroke="#2e3f8f" stroke-width="1"/></svg>
<svg style="left:501px;top:366px" width="9" height="9" viewBox="0 0 9 9"><defs><linearGradient id="g31" x1="0" y1="0" x2="1" y2="1"><stop offset="0" stop-color="#ffffff"/><stop offset="1" stop-color="#d4d4d4"/></linearGradient></defs><rect x="0.5" y="0.5" width="8" height="8" rx="1" fill="url(#g31)" stroke="#8f8f8f"/><path d="M2 4.5H7" stroke="#2e3f8f" stroke-width="1"/><path d="M4.5 2V7" stroke="#2e3f8f" stroke-width="1"/></svg>
<svg style="left:517px;top:186px" width="16" height="16" viewBox="0 0 16 16"><defs><linearGradient id="g32" x1="0" y1="0" x2="0" y2="1"><stop offset="0" stop-color="#ffffff"/><stop offset="1" stop-color="#d6d6d6"/></linearGradient></defs><rect x="0.5" y="0.5" width="15" height="15" rx="0" fill="url(#g32)" stroke="#4a4a4a"/><path d="M0.5 15.5H15.5" stroke="#2e2e2e"/><path d="M9 5.5H11.5V9" fill="none" stroke="#333" stroke-width="1"/><path d="M3.2 2.5L8.8 5.5L3.2 8.5Z" fill="#4fa2ea" stroke="#1a5aa6" stroke-width="1" stroke-linejoin="round"/><path d="M4.2 4.4L6.4 5.5L4.2 6.6Z" fill="#8cc8f6"/><rect x="8.9" y="9.7" width="4.3" height="4.3" fill="#e8602a" stroke="#9c2c0a" stroke-width="0.9"/></svg>
<svg style="left:536px;top:208px" width="16" height="16" viewBox="0 0 16 16"><defs><linearGradient id="g33" x1="0" y1="0" x2="0" y2="1"><stop offset="0" stop-color="#ffffff"/><stop offset="1" stop-color="#cfcfcf"/></linearGradient></defs><rect x="0.5" y="0.5" width="15" height="15" fill="url(#g33)" stroke="#7a7a7a"/><path d="M0.5 15.5H15.5" stroke="#505050"/><path d="M8.6 5.5H11.5V9" fill="none" stroke="#444" stroke-width="1"/><path d="M3 2.4L8.6 5.5L3 8.6Z" fill="#fafafa" stroke="#444" stroke-width="1" stroke-linejoin="round"/><rect x="8.9" y="9.5" width="4.4" height="4.4" fill="#f4f4f4" stroke="#444" stroke-width="1"/></svg>
<svg style="left:536px;top:230px" width="16" height="16" viewBox="0 0 16 16"><rect x="0.5" y="0.5" width="7.6" height="6.4" rx="1.5" fill="#ecd9a6" stroke="#2e2e2e" stroke-width="1.1"/><path d="M1 2.6V2Q1 1 2 1H6.6Q7.6 1 7.6 2V2.6Z" fill="#4da3e8"/><rect x="7.5" y="8.7" width="7.6" height="6.4" rx="1.5" fill="#ecd9a6" stroke="#2e2e2e" stroke-width="1.1"/><path d="M8 10.799999999999999V10.2Q8 9.2 9 9.2H13.6Q14.6 9.2 14.6 10.2V10.799999999999999Z" fill="#4da3e8"/><path d="M9.4 1.4Q12.8 1.2 12.8 5" fill="none" stroke="#222" stroke-width="1"/><path d="M11.2 4.2L12.8 6.4L14.4 4.2Z" fill="#222"/><path d="M6.2 14.2Q2.8 14.4 2.8 10.6" fill="none" stroke="#222" stroke-width="1"/><path d="M1.2 11.4L2.8 9.2L4.4 11.4Z" fill="#222"/></svg>
<svg style="left:517px;top:252px" width="16" height="16" viewBox="0 0 16 16"><defs><linearGradient id="g34" x1="0" y1="0" x2="1" y2="1"><stop offset="0" stop-color="#f4f4f4"/><stop offset="1" stop-color="#b4b4b4"/></linearGradient><linearGradient id="g35" x1="0" y1="0" x2="1" y2="1"><stop offset="0" stop-color="#b4b4b4"/><stop offset="1" stop-color="#686868"/></linearGradient></defs><path d="M12.19 7.69L13.15 8.74L12.52 10.10L11.09 10.04L10.23 10.90L10.28 12.32L8.93 12.95L7.88 11.99L6.66 12.10L5.79 13.22L4.35 12.84L4.16 11.43L3.16 10.72L1.77 11.03L0.91 9.80L1.68 8.60L1.36 7.42L0.10 6.76L0.23 5.27L1.59 4.84L2.11 3.73L1.57 2.41L2.63 1.36L3.94 1.90L5.05 1.39L5.48 0.03L6.97 -0.10L7.63 1.16L8.81 1.48L10.01 0.72L11.24 1.58L10.93 2.97L11.63 3.97L13.04 4.16L13.43 5.60L12.30 6.47Z" fill="url(#g34)" stroke="#3c3c3c" stroke-width="1" stroke-linejoin="round"/><circle cx="6.8" cy="6.6" r="2.7" fill="#fdfdfd" stroke="#4a4a4a" stroke-width="1.1"/><path d="M14.98 11.38L15.76 12.12L15.34 13.22L14.26 13.25L13.61 13.94L13.63 15.02L12.56 15.50L11.77 14.76L10.82 14.78L10.08 15.56L8.98 15.14L8.95 14.06L8.26 13.41L7.18 13.43L6.70 12.36L7.44 11.57L7.42 10.62L6.64 9.88L7.06 8.78L8.14 8.75L8.79 8.06L8.77 6.98L9.84 6.50L10.63 7.24L11.58 7.22L12.32 6.44L13.42 6.86L13.45 7.94L14.14 8.59L15.22 8.57L15.70 9.64L14.96 10.43Z" fill="url(#g35)" stroke="#383838" stroke-width="0.9" stroke-linejoin="round"/><circle cx="11.2" cy="11" r="1.6" fill="#b8b8b8" stroke="#444" stroke-width="0.9"/></svg>
<svg style="left:536px;top:274px" width="16" height="16" viewBox="0 0 16 16"><defs><linearGradient id="g36" x1="0" y1="0" x2="1" y2="1"><stop offset="0" stop-color="#f4f4f4"/><stop offset="1" stop-color="#b4b4b4"/></linearGradient><linearGradient id="g37" x1="0" y1="0" x2="1" y2="1"><stop offset="0" stop-color="#b4b4b4"/><stop offset="1" stop-color="#686868"/></linearGradient></defs><path d="M12.19 7.69L13.15 8.74L12.52 10.10L11.09 10.04L10.23 10.90L10.28 12.32L8.93 12.95L7.88 11.99L6.66 12.10L5.79 13.22L4.35 12.84L4.16 11.43L3.16 10.72L1.77 11.03L0.91 9.80L1.68 8.60L1.36 7.42L0.10 6.76L0.23 5.27L1.59 4.84L2.11 3.73L1.57 2.41L2.63 1.36L3.94 1.90L5.05 1.39L5.48 0.03L6.97 -0.10L7.63 1.16L8.81 1.48L10.01 0.72L11.24 1.58L10.93 2.97L11.63 3.97L13.04 4.16L13.43 5.60L12.30 6.47Z" fill="url(#g36)" stroke="#3c3c3c" stroke-width="1" stroke-linejoin="round"/><circle cx="6.8" cy="6.6" r="2.7" fill="#fdfdfd" stroke="#4a4a4a" stroke-width="1.1"/><path d="M14.98 11.38L15.76 12.12L15.34 13.22L14.26 13.25L13.61 13.94L13.63 15.02L12.56 15.50L11.77 14.76L10.82 14.78L10.08 15.56L8.98 15.14L8.95 14.06L8.26 13.41L7.18 13.43L6.70 12.36L7.44 11.57L7.42 10.62L6.64 9.88L7.06 8.78L8.14 8.75L8.79 8.06L8.77 6.98L9.84 6.50L10.63 7.24L11.58 7.22L12.32 6.44L13.42 6.86L13.45 7.94L14.14 8.59L15.22 8.57L15.70 9.64L14.96 10.43Z" fill="url(#g37)" stroke="#383838" stroke-width="0.9" stroke-linejoin="round"/><circle cx="11.2" cy="11" r="1.6" fill="#b8b8b8" stroke="#444" stroke-width="0.9"/></svg>
<div style="left:8px;top:489px;width:1px;height:167px;background:repeating-linear-gradient(to bottom,#7f7f7f 0,#7f7f7f 1px,transparent 1px,transparent 2px)"></div>
<div style="left:24px;top:494px;width:1px;height:30px;background:repeating-linear-gradient(to bottom,#7f7f7f 0,#7f7f7f 1px,transparent 1px,transparent 2px)"></div>
<div style="left:24px;top:561px;width:1px;height:7px;background:repeating-linear-gradient(to bottom,#7f7f7f 0,#7f7f7f 1px,transparent 1px,transparent 2px)"></div>
<div style="left:14px;top:484px;width:4px;height:1px;background:repeating-linear-gradient(to right,#7f7f7f 0,#7f7f7f 1px,transparent 1px,transparent 2px)"></div>
<div style="left:30px;top:506px;width:4px;height:1px;background:repeating-linear-gradient(to right,#7f7f7f 0,#7f7f7f 1px,transparent 1px,transparent 2px)"></div>
<div style="left:30px;top:528px;width:4px;height:1px;background:repeating-linear-gradient(to right,#7f7f7f 0,#7f7f7f 1px,transparent 1px,transparent 2px)"></div>
<div style="left:14px;top:550px;width:4px;height:1px;background:repeating-linear-gradient(to right,#7f7f7f 0,#7f7f7f 1px,transparent 1px,transparent 2px)"></div>
<div style="left:30px;top:572px;width:4px;height:1px;background:repeating-linear-gradient(to right,#7f7f7f 0,#7f7f7f 1px,transparent 1px,transparent 2px)"></div>
<div style="left:14px;top:660px;width:5px;height:1px;background:repeating-linear-gradient(to right,#7f7f7f 0,#7f7f7f 1px,transparent 1px,transparent 2px)"></div>
<div style="left:40px;top:585px;width:1px;height:10px;background:repeating-linear-gradient(to bottom,#7f7f7f 0,#7f7f7f 1px,transparent 1px,transparent 2px)"></div>
<div style="left:40px;top:594px;width:10px;height:1px;background:repeating-linear-gradient(to right,#7f7f7f 0,#7f7f7f 1px,transparent 1px,transparent 2px)"></div>
<svg style="left:4px;top:480px" width="9" height="9" viewBox="0 0 9 9"><defs><linearGradient id="g38" x1="0" y1="0" x2="1" y2="1"><stop offset="0" stop-color="#ffffff"/><stop offset="1" stop-color="#d4d4d4"/></linearGradient></defs><rect x="0.5" y="0.5" width="8" height="8" rx="1" fill="url(#g38)" stroke="#8f8f8f"/><path d="M2 4.5H7" stroke="#2e3f8f" stroke-width="1"/></svg>
<svg style="left:20px;top:502px" width="9" height="9" viewBox="0 0 9 9"><defs><linearGradient id="g39" x1="0" y1="0" x2="1" y2="1"><stop offset="0" stop-color="#ffffff"/><stop offset="1" stop-color="#d4d4d4"/></linearGradient></defs><rect x="0.5" y="0.5" width="8" height="8" rx="1" fill="url(#g39)" stroke="#8f8f8f"/><path d="M2 4.5H7" stroke="#2e3f8f" stroke-width="1"/><path d="M4.5 2V7" stroke="#2e3f8f" stroke-width="1"/></svg>
<svg style="left:20px;top:524px" width="9" height="9" viewBox="0 0 9 9"><defs><linearGradient id="g40" x1="0" y1="0" x2="1" y2="1"><stop offset="0" stop-color="#ffffff"/><stop offset="1" stop-color="#d4d4d4"/></linearGradient></defs><rect x="0.5" y="0.5" width="8" height="8" rx="1" fill="url(#g40)" stroke="#8f8f8f"/><path d="M2 4.5H7" stroke="#2e3f8f" stroke-width="1"/><path d="M4.5 2V7" stroke="#2e3f8f" stroke-width="1"/></svg>
<svg style="left:4px;top:546px" width="9" height="9" viewBox="0 0 9 9"><defs><linearGradient id="g41" x1="0" y1="0" x2="1" y2="1"><stop offset="0" stop-color="#ffffff"/><stop offset="1" stop-color="#d4d4d4"/></linearGradient></defs><rect x="0.5" y="0.5" width="8" height="8" rx="1" fill="url(#g41)" stroke="#8f8f8f"/><path d="M2 4.5H7" stroke="#2e3f8f" stroke-width="1"/></svg>
<svg style="left:20px;top:568px" width="9" height="9" viewBox="0 0 9 9"><defs><linearGradient id="g42" x1="0" y1="0" x2="1" y2="1"><stop offset="0" stop-color="#ffffff"/><stop offset="1" stop-color="#d4d4d4"/></linearGradient></defs><rect x="0.5" y="0.5" width="8" height="8" rx="1" fill="url(#g42)" stroke="#8f8f8f"/><path d="M2 4.5H7" stroke="#2e3f8f" stroke-width="1"/></svg>
<svg style="left:4px;top:656px" width="9" height="9" viewBox="0 0 9 9"><defs><linearGradient id="g43" x1="0" y1="0" x2="1" y2="1"><stop offset="0" stop-color="#ffffff"/><stop offset="1" stop-color="#d4d4d4"/></linearGradient></defs><rect x="0.5" y="0.5" width="8" height="8" rx="1" fill="url(#g43)" stroke="#8f8f8f"/><path d="M2 4.5H7" stroke="#2e3f8f" stroke-width="1"/><path d="M4.5 2V7" stroke="#2e3f8f" stroke-width="1"/></svg>
<svg style="left:18px;top:476px" width="16" height="16" viewBox="0 0 16 16"><defs><linearGradient id="g44" x1="0" y1="0" x2="0" y2="1"><stop offset="0" stop-color="#ffffff"/><stop offset="1" stop-color="#d6d6d6"/></linearGradient></defs><rect x="0.5" y="0.5" width="15" height="15" rx="0" fill="url(#g44)" stroke="#4a4a4a"/><path d="M0.5 15.5H15.5" stroke="#2e2e2e"/><path d="M9 5.5H11.5V9" fill="none" stroke="#333" stroke-width="1"/><path d="M3.2 2.5L8.8 5.5L3.2 8.5Z" fill="#4fa2ea" stroke="#1a5aa6" stroke-width="1" stroke-linejoin="round"/><path d="M4.2 4.4L6.4 5.5L4.2 6.6Z" fill="#8cc8f6"/><rect x="8.9" y="9.7" width="4.3" height="4.3" fill="#e8602a" stroke="#9c2c0a" stroke-width="0.9"/></svg>
<svg style="left:34px;top:498px" width="16" height="16" viewBox="0 0 16 16"><defs><linearGradient id="g45" x1="0" y1="0" x2="0" y2="1"><stop offset="0" stop-color="#ffffff"/><stop offset="1" stop-color="#cfcfcf"/></linearGradient></defs><rect x="0.5" y="0.5" width="15" height="15" fill="url(#g45)" stroke="#7a7a7a"/><path d="M0.5 15.5H15.5" stroke="#505050"/><path d="M8.6 5.5H11.5V9" fill="none" stroke="#444" stroke-width="1"/><path d="M3 2.4L8.6 5.5L3 8.6Z" fill="#fafafa" stroke="#444" stroke-width="1" stroke-linejoin="round"/><rect x="8.9" y="9.5" width="4.4" height="4.4" fill="#f4f4f4" stroke="#444" stroke-width="1"/></svg>
<svg style="left:34px;top:520px" width="16" height="16" viewBox="0 0 16 16"><rect x="0.5" y="0.5" width="7.6" height="6.4" rx="1.5" fill="#ecd9a6" stroke="#2e2e2e" stroke-width="1.1"/><path d="M1 2.6V2Q1 1 2 1H6.6Q7.6 1 7.6 2V2.6Z" fill="#4da3e8"/><rect x="7.5" y="8.7" width="7.6" height="6.4" rx="1.5" fill="#ecd9a6" stroke="#2e2e2e" stroke-width="1.1"/><path d="M8 10.799999999999999V10.2Q8 9.2 9 9.2H13.6Q14.6 9.2 14.6 10.2V10.799999999999999Z" fill="#4da3e8"/><path d="M9.4 1.4Q12.8 1.2 12.8 5" fill="none" stroke="#222" stroke-width="1"/><path d="M11.2 4.2L12.8 6.4L14.4 4.2Z" fill="#222"/><path d="M6.2 14.2Q2.8 14.4 2.8 10.6" fill="none" stroke="#222" stroke-width="1"/><path d="M1.2 11.4L2.8 9.2L4.4 11.4Z" fill="#222"/></svg>
<svg style="left:18px;top:542px" width="16" height="16" viewBox="0 0 16 16"><defs><linearGradient id="g46" x1="0" y1="0" x2="1" y2="1"><stop offset="0" stop-color="#f4f4f4"/><stop offset="1" stop-color="#b4b4b4"/></linearGradient><linearGradient id="g47" x1="0" y1="0" x2="1" y2="1"><stop offset="0" stop-color="#b4b4b4"/><stop offset="1" stop-color="#686868"/></linearGradient></defs><path d="M12.19 7.69L13.15 8.74L12.52 10.10L11.09 10.04L10.23 10.90L10.28 12.32L8.93 12.95L7.88 11.99L6.66 12.10L5.79 13.22L4.35 12.84L4.16 11.43L3.16 10.72L1.77 11.03L0.91 9.80L1.68 8.60L1.36 7.42L0.10 6.76L0.23 5.27L1.59 4.84L2.11 3.73L1.57 2.41L2.63 1.36L3.94 1.90L5.05 1.39L5.48 0.03L6.97 -0.10L7.63 1.16L8.81 1.48L10.01 0.72L11.24 1.58L10.93 2.97L11.63 3.97L13.04 4.16L13.43 5.60L12.30 6.47Z" fill="url(#g46)" stroke="#3c3c3c" stroke-width="1" stroke-linejoin="round"/><circle cx="6.8" cy="6.6" r="2.7" fill="#fdfdfd" stroke="#4a4a4a" stroke-width="1.1"/><path d="M14.98 11.38L15.76 12.12L15.34 13.22L14.26 13.25L13.61 13.94L13.63 15.02L12.56 15.50L11.77 14.76L10.82 14.78L10.08 15.56L8.98 15.14L8.95 14.06L8.26 13.41L7.18 13.43L6.70 12.36L7.44 11.57L7.42 10.62L6.64 9.88L7.06 8.78L8.14 8.75L8.79 8.06L8.77 6.98L9.84 6.50L10.63 7.24L11.58 7.22L12.32 6.44L13.42 6.86L13.45 7.94L14.14 8.59L15.22 8.57L15.70 9.64L14.96 10.43Z" fill="url(#g47)" stroke="#383838" stroke-width="0.9" stroke-linejoin="round"/><circle cx="11.2" cy="11" r="1.6" fill="#b8b8b8" stroke="#444" stroke-width="0.9"/></svg>
<svg style="left:34px;top:564px" width="16" height="16" viewBox="0 0 16 16"><defs><linearGradient id="g48" x1="0" y1="0" x2="1" y2="1"><stop offset="0" stop-color="#f4f4f4"/><stop offset="1" stop-color="#b4b4b4"/></linearGradient><linearGradient id="g49" x1="0" y1="0" x2="1" y2="1"><stop offset="0" stop-color="#b4b4b4"/><stop offset="1" stop-color="#686868"/></linearGradient></defs><path d="M12.19 7.69L13.15 8.74L12.52 10.10L11.09 10.04L10.23 10.90L10.28 12.32L8.93 12.95L7.88 11.99L6.66 12.10L5.79 13.22L4.35 12.84L4.16 11.43L3.16 10.72L1.77 11.03L0.91 9.80L1.68 8.60L1.36 7.42L0.10 6.76L0.23 5.27L1.59 4.84L2.11 3.73L1.57 2.41L2.63 1.36L3.94 1.90L5.05 1.39L5.48 0.03L6.97 -0.10L7.63 1.16L8.81 1.48L10.01 0.72L11.24 1.58L10.93 2.97L11.63 3.97L13.04 4.16L13.43 5.60L12.30 6.47Z" fill="url(#g48)" stroke="#3c3c3c" stroke-width="1" stroke-linejoin="round"/><circle cx="6.8" cy="6.6" r="2.7" fill="#fdfdfd" stroke="#4a4a4a" stroke-width="1.1"/><path d="M14.98 11.38L15.76 12.12L15.34 13.22L14.26 13.25L13.61 13.94L13.63 15.02L12.56 15.50L11.77 14.76L10.82 14.78L10.08 15.56L8.98 15.14L8.95 14.06L8.26 13.41L7.18 13.43L6.70 12.36L7.44 11.57L7.42 10.62L6.64 9.88L7.06 8.78L8.14 8.75L8.79 8.06L8.77 6.98L9.84 6.50L10.63 7.24L11.58 7.22L12.32 6.44L13.42 6.86L13.45 7.94L14.14 8.59L15.22 8.57L15.70 9.64L14.96 10.43Z" fill="url(#g49)" stroke="#383838" stroke-width="0.9" stroke-linejoin="round"/><circle cx="11.2" cy="11" r="1.6" fill="#b8b8b8" stroke="#444" stroke-width="0.9"/></svg>
<svg style="left:912px;top:608px" width="16" height="16" viewBox="0 0 16 16"><circle cx="8" cy="8" r="7" fill="#fff" stroke="#c4901a" stroke-width="1.8"/><circle cx="8" cy="8" r="3" fill="#000"/></svg>
<svg style="left:949px;top:608px" width="16" height="16" viewBox="0 0 16 16"><circle cx="8" cy="8" r="7" fill="#fff" stroke="#9a9a9a" stroke-width="1.8"/></svg>
<svg style="left:912px;top:630px" width="16" height="16" viewBox="0 0 16 16"><circle cx="8" cy="8" r="7" fill="#fff" stroke="#9a9a9a" stroke-width="1.8"/></svg>
<svg style="left:949px;top:630px" width="16" height="16" viewBox="0 0 16 16"><circle cx="8" cy="8" r="7" fill="#fff" stroke="#46b9eb" stroke-width="1.8"/><circle cx="8" cy="8" r="3" fill="#000"/></svg>
<svg style="left:980px;top:710px" width="13" height="13" viewBox="0 0 13 13"><rect x="10" y="2" width="2" height="2" fill="#fff"/><rect x="9" y="1" width="2" height="2" fill="#a39b86"/><rect x="6" y="6" width="2" height="2" fill="#fff"/><rect x="5" y="5" width="2" height="2" fill="#a39b86"/><rect x="10" y="6" width="2" height="2" fill="#fff"/><rect x="9" y="5" width="2" height="2" fill="#a39b86"/><rect x="2" y="10" width="2" height="2" fill="#fff"/><rect x="1" y="9" width="2" height="2" fill="#a39b86"/><rect x="6" y="10" width="2" height="2" fill="#fff"/><rect x="5" y="9" width="2" height="2" fill="#a39b86"/><rect x="10" y="10" width="2" height="2" fill="#fff"/><rect x="9" y="9" width="2" height="2" fill="#a39b86"/></svg>
<div style="left:0px;top:0px;width:994px;height:1px;background:#a9a9a9;"></div>
<div style="left:0px;top:0px;width:221px;height:1px;background:#595959;"></div>
<div style="left:22px;top:0px;width:13px;height:1px;background:#3f9a4a;"></div>
<div style="left:0px;top:0px;width:1px;height:724px;background:#505050;"></div>
<div style="left:0px;top:31px;width:1px;height:26px;background:#6b5b52;"></div>
<div style="left:993px;top:1px;width:1px;height:722px;background:linear-gradient(#dcdcdc,#c8c8c8 30%,#a4a4a4);"></div>
<div style="left:0px;top:723px;width:994px;height:1px;background:linear-gradient(to right,#5c5c5c,#6a6a6a 60%,#8c8c8c);"></div>
<span class="t" style="left:39.52px;top:187px;font-size:12px;color:#000;letter-spacing:0.211px;">Simulink</span>
<span class="t" style="left:58.68px;top:209px;font-size:12px;color:#000;transform:scaleX(0.9638);">DeltaSubsystem</span>
<span class="t" style="left:58.64px;top:231px;font-size:12px;color:#000;letter-spacing:0.014px;">Downsample</span>
<span class="t" style="left:39.54px;top:253px;font-size:12px;color:#000;letter-spacing:0.012px;">Model Configuration Sets</span>
<span class="t" style="left:59.37px;top:275px;font-size:12px;color:#000;letter-spacing:0.175px;">Configuration</span>
<span class="t" style="left:62.50px;top:297px;font-size:12px;color:#000;letter-spacing:0.184px;">Optimization</span>
<span class="t" style="left:63.35px;top:319px;font-size:12px;color:#000;transform:scaleX(0.9935);">Reuse global block outputs</span>
<span class="t" style="left:63.35px;top:341px;font-size:12px;color:#000;transform:scaleX(0.9917);">Eliminate superfluous local variables (expression folding)</span>
<span class="t" style="left:383.21px;top:319px;font-size:12px;color:#000;letter-spacing:0.453px;">on</span>
<span class="t" style="left:383.21px;top:341px;font-size:12px;color:#000;letter-spacing:0.709px;">off</span>
<span class="t" style="left:23.04px;top:363px;font-size:12px;color:#000;transform:scaleX(0.9770);">Schedule Editor</span>
<span class="t" style="left:535.52px;top:187px;font-size:12px;color:#000;letter-spacing:0.211px;">Simulink</span>
<span class="t" style="left:554.68px;top:209px;font-size:12px;color:#000;transform:scaleX(0.9638);">DeltaSubsystem</span>
<span class="t" style="left:554.64px;top:231px;font-size:12px;color:#000;letter-spacing:0.014px;">Downsample</span>
<span class="t" style="left:535.54px;top:253px;font-size:12px;color:#000;letter-spacing:0.012px;">Model Configuration Sets</span>
<span class="t" style="left:555.37px;top:275px;font-size:12px;color:#000;letter-spacing:0.175px;">Configuration</span>
<span class="t" style="left:558.50px;top:297px;font-size:12px;color:#000;letter-spacing:0.184px;">Optimization</span>
<span class="t" style="left:559.35px;top:319px;font-size:12px;color:#000;transform:scaleX(0.9935);">Reuse global block outputs</span>
<span class="t" style="left:559.35px;top:341px;font-size:12px;color:#000;transform:scaleX(0.9917);">Eliminate superfluous local variables (expression folding)</span>
<span class="t" style="left:879.21px;top:319px;font-size:12px;color:#000;letter-spacing:0.709px;">off</span>
<span class="t" style="left:879.21px;top:341px;font-size:12px;color:#000;letter-spacing:0.453px;">on</span>
<span class="t" style="left:519.04px;top:363px;font-size:12px;color:#000;transform:scaleX(0.9770);">Schedule Editor</span>
<span class="t" style="left:25.48px;top:158px;font-size:12px;color:#000;font-weight:700;letter-spacing:0.373px;">Left</span>
<span class="t" style="left:51.68px;top:158px;font-size:12px;color:#000;font-weight:700;">:</span>
<span class="t" style="left:57.89px;top:158px;font-size:12px;color:#000;transform:scaleX(0.9505);">ReuseGlobalBlockOutputs_ex_reusable_csc_model.slx</span>
<span class="t" style="left:521.82px;top:158px;font-size:12px;color:#000;font-weight:700;transform:scaleX(0.9569);">Right</span>
<span class="t" style="left:554.28px;top:158px;font-size:12px;color:#000;font-weight:700;">:</span>
<span class="t" style="left:561.63px;top:158px;font-size:12px;color:#000;transform:scaleX(0.9365);">ex_reusable_csc_model.slx</span>
<span class="t" style="left:26.89px;top:448px;font-size:12px;color:#000;font-weight:700;transform:scaleX(0.9805);">Target</span>
<span class="t" style="left:62.48px;top:448px;font-size:12px;color:#000;">*</span>
<span class="t" style="left:70.48px;top:448px;font-size:12px;color:#000;font-weight:700;">:</span>
<span class="t" style="left:77.11px;top:448px;font-size:12px;color:#000;transform:scaleX(0.9571);">targetFile.slx</span>
<span class="t" style="left:36.22px;top:477px;font-size:12px;color:#000;letter-spacing:0.254px;">Simulink</span>
<span class="t" style="left:52.37px;top:499px;font-size:12px;color:#000;transform:scaleX(0.9696);">DeltaSubsystem</span>
<span class="t" style="left:52.34px;top:521px;font-size:12px;color:#000;letter-spacing:0.014px;">Downsample</span>
<span class="t" style="left:36.24px;top:543px;font-size:12px;color:#000;letter-spacing:0.012px;">Model Configuration Sets</span>
<span class="t" style="left:53.07px;top:565px;font-size:12px;color:#000;letter-spacing:0.175px;">Configuration</span>
<span class="t" style="left:53.60px;top:587px;font-size:12px;color:#000;letter-spacing:0.184px;">Optimization</span>
<span class="t" style="left:70.35px;top:609px;font-size:12px;color:#000;transform:scaleX(0.9949);">Reuse global block outputs</span>
<span class="t" style="left:70.35px;top:631px;font-size:12px;color:#000;transform:scaleX(0.9917);">Eliminate superfluous local variables (expression folding)</span>
<span class="t" style="left:390.51px;top:609px;font-size:12px;color:#000;letter-spacing:0.453px;">on</span>
<span class="t" style="left:390.51px;top:631px;font-size:12px;color:#000;letter-spacing:0.453px;">on</span>
<span class="t" style="left:20.04px;top:653px;font-size:12px;color:#000;transform:scaleX(0.9770);">Schedule Editor</span>
<span class="t" style="left:29.20px;top:8px;font-size:12px;color:#000;transform:scaleX(0.9425);">ReuseGlobalBlockOutputs_ex_reusable_csc_model.slx vs. ex_reusable_csc_model.slx</span>
<span class="t" style="left:32.20px;top:38px;font-size:11px;color:#3a3a3a;transform:scaleX(0.9442);">MERGE</span>
<span class="t" style="left:8.26px;top:97px;font-size:12px;color:#111;transform:scaleX(0.9821);">Previous</span>
<span class="t" style="left:66.54px;top:97px;font-size:12px;color:#111;letter-spacing:0.141px;">Next</span>
<span class="t" style="left:125.49px;top:65px;font-size:12px;color:#111;transform:scaleX(0.9563);">Refresh</span>
<span class="t" style="left:125.44px;top:89px;font-size:12px;color:#111;letter-spacing:0.142px;">Find</span>
<span class="t" style="left:123.34px;top:113px;font-size:12px;color:#111;letter-spacing:0.009px;">Linked Scrolling</span>
<span class="t" style="left:237.24px;top:77px;font-size:12px;color:#111;letter-spacing:0.217px;">Top Model</span>
<span class="t" style="left:216.64px;top:101px;font-size:12px;color:#111;letter-spacing:0.390px;">Bottom Model</span>
<span class="t" style="left:403.74px;top:77px;font-size:12px;color:#111;letter-spacing:0.375px;">Highlight Now</span>
<span class="t" style="left:402.04px;top:101px;font-size:12px;color:#111;letter-spacing:0.123px;">Always Highlight</span>
<span class="t" style="left:524.12px;top:65px;font-size:12px;color:#111;letter-spacing:0.005px;">Show</span>
<span class="t" style="left:524.54px;top:89px;font-size:12px;color:#111;letter-spacing:0.626px;">Hide</span>
<span class="t" style="left:593.60px;top:66px;font-size:12px;color:#111;transform:scaleX(0.9487);">Lines</span>
<span class="t" style="left:593.54px;top:87px;font-size:12px;color:#111;letter-spacing:0.069px;">Nonfunctional Changes</span>
<span class="t" style="left:593.56px;top:108px;font-size:12px;color:#111;transform:scaleX(0.9786);">Block Defaults</span>
<span class="t" style="left:767.54px;top:97px;font-size:12px;color:#111;letter-spacing:0.297px;">New</span>
<span class="t" style="left:766.78px;top:113px;font-size:12px;color:#111;transform:scaleX(0.9672);">Filter</span>
<span class="t" style="left:812.09px;top:97px;font-size:12px;color:#111;transform:scaleX(0.9323);">Save</span>
<span class="t" style="left:815.54px;top:113px;font-size:12px;color:#111;letter-spacing:-0.090px;">File</span>
<span class="t" style="left:853.08px;top:97px;font-size:12px;color:#111;transform:scaleX(0.9679);">Close</span>
<span class="t" style="left:850.54px;top:113px;font-size:12px;color:#111;letter-spacing:0.209px;">Merge</span>
<span class="t" style="left:78.48px;top:133px;font-size:11px;color:#666;transform:scaleX(0.9679);">NAVIGATE</span>
<span class="t" style="left:323.62px;top:133px;font-size:11px;color:#666;transform:scaleX(0.9362);">HIGHLIGHT</span>
<span class="t" style="left:630.86px;top:133px;font-size:11px;color:#666;transform:scaleX(0.8970);">FILTER</span>
<span class="t" style="left:828.37px;top:133px;font-size:11px;color:#666;transform:scaleX(0.9876);">FINISH</span>
</div></body></html>
